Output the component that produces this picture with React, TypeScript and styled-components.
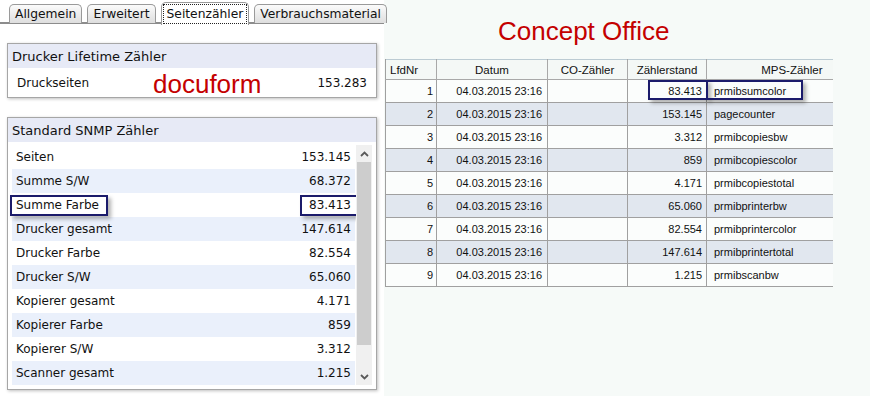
import React from "react";
import styled, { createGlobalStyle } from "styled-components";

const GlobalStyle = createGlobalStyle`
  html, body {
    margin: 0;
    padding: 0;
    background: #f6faf8;
  }
  body {
    width: 870px;
    height: 396px;
    overflow: hidden;
  }
`;

const Page = styled.div`
  display: flex;
  width: 870px;
  height: 396px;
`;

/* ---------- left: docuform ---------- */

const LeftPanel = styled.div`
  width: 384px;
  flex: 0 0 384px;
  background: #ffffff;
  font-family: "DejaVu Sans", Verdana, sans-serif;
  color: #111;
`;

const TabBar = styled.div`
  display: flex;
  gap: 5px;
  padding: 4px 0 0 9px;
  height: 18px;
  border-bottom: 2px solid #8c8c8c;
`;

const Tab = styled.div<{ $active?: boolean }>`
  display: flex;
  align-items: center;
  height: ${(p) => (p.$active ? "22px" : "18px")};
  margin-top: ${(p) => (p.$active ? "-2px" : "0")};
  padding: 0 4px;
  font-size: 12.3px;
  border: 1px solid #9a9a9a;
  border-bottom: none;
  border-radius: 5px 5px 0 0;
  background: ${(p) =>
    p.$active ? "#ffffff" : "linear-gradient(#fbfbfb, #dedede)"};
  position: relative;
  z-index: ${(p) => (p.$active ? 1 : 0)};
  span {
    outline: ${(p) => (p.$active ? "1px dotted #222" : "none")};
    outline-offset: 2px;
    padding: 0 1px;
  }
`;

const Box = styled.div<{ $top: number }>`
  margin: ${(p) => p.$top}px 0 0 7px;
  width: 368px;
  border: 1px solid #a6a6a6;
  box-shadow: 1px 1px 3px rgba(0, 0, 0, 0.25);
  background: #fff;
`;

const BoxHeader = styled.div`
  height: 24px;
  display: flex;
  align-items: center;
  padding-left: 4px;
  background: #e7eaf6;
  font-size: 13px;
`;

const LifetimeRow = styled.div`
  height: 29px;
  display: flex;
  align-items: center;
  padding: 0 9px 0 9px;
  font-size: 12px;
`;

const RowLabel = styled.span<{ $w?: number }>`
  flex: 0 0 ${(p) => (p.$w ? `${p.$w}px` : "auto")};
`;

const Brand = styled.span`
  font-family: "Liberation Sans", Arial, sans-serif;
  font-size: 26px;
  color: #c40000;
  line-height: 28px;
  margin-top: 2px;
`;

const RowValue = styled.span`
  margin-left: auto;
`;

const BoxBody = styled.div`
  display: flex;
  gap: 1px;
  padding: 3px 4px 4px 4px;
`;

const List = styled.div`
  flex: 1;
`;

const ListRow = styled.div<{ $alt: boolean }>`
  height: 24px;
  display: flex;
  align-items: center;
  justify-content: space-between;
  padding: 0 4px;
  font-size: 12px;
  background: ${(p) => (p.$alt ? "#eaf0fb" : "#ffffff")};
`;

const Marked = styled.span<{ $l: number; $r: number }>`
  display: inline-block;
  border: 2px solid #1b1b6b;
  padding: 1px ${(p) => p.$r}px 1px ${(p) => p.$l}px;
  margin: 0 ${(p) => -p.$r - 2}px 0 ${(p) => -p.$l - 2}px;
  box-shadow: 3px 3px 4px rgba(0, 0, 0, 0.3);
  line-height: 15px;
`;

const Scrollbar = styled.div`
  width: 16px;
  flex: 0 0 16px;
  background: #f0f0f0;
  display: flex;
  flex-direction: column;
`;

const ScrollArrow = styled.div<{ $end?: boolean }>`
  height: 17px;
  margin-top: ${(p) => (p.$end ? "auto" : "0")};
  display: flex;
  align-items: center;
  justify-content: center;
`;

const ScrollThumb = styled.div`
  flex: 0 0 183px;
  margin: 0 1px;
  background: #cdcdcd;
`;

/* ---------- right: Concept Office ---------- */

const RightPanel = styled.div`
  flex: 1;
  padding-left: 1px;
  font-family: "Liberation Sans", Arial, sans-serif;
`;

const Title = styled.div`
  padding: 16px 0 0 113px;
  height: 30px;
  margin-bottom: 13px;
  font-size: 26px;
  line-height: 30px;
  color: #c40000;
`;

const Table = styled.table`
  border-collapse: collapse;
  table-layout: fixed;
  width: 447px;
  font-size: 11px;
  color: #111;
  border-top: 1px solid #bccbd3;
`;

const Col = styled.col<{ $w: number }>`
  width: ${(p) => p.$w}px;
`;

const HeadCell = styled.th<{ $align: string }>`
  height: 19px;
  padding: 0 ${(p) => (p.$align === "right" ? "10px" : "4px")};
  font-weight: normal;
  font-size: 11.5px;
  text-align: ${(p) => p.$align};
  background: #f4f8f6;
  border: 1px solid #a8a8a8;
  border-top: none;
  border-left-color: #cfcfcf;
  white-space: nowrap;
  overflow: hidden;
  &:first-child {
    border-left: 1px solid #a0a0a0;
  }
  &:last-child {
    border-right: none;
  }
`;

const BodyRow = styled.tr<{ $alt: boolean }>`
  background: ${(p) => (p.$alt ? "#e1e7ef" : "#fbfdfc")};
`;

const Cell = styled.td<{ $align?: string; $pad?: number }>`
  position: relative;
  height: 22px;
  padding: 0 ${(p) => p.$pad ?? 4}px;
  text-align: ${(p) => p.$align ?? "right"};
  border: 1px solid #a0a0a0;
  white-space: nowrap;
  &:last-child {
    border-right: none;
  }
`;

const CellMark = styled.div<{ $left: number; $width: number }>`
  position: absolute;
  top: 0;
  left: ${(p) => p.$left}px;
  width: ${(p) => p.$width}px;
  height: 20px;
  box-sizing: border-box;
  border: 2px solid #1b1b6b;
  box-shadow: 3px 3px 4px rgba(0, 0, 0, 0.3);
  pointer-events: none;
`;

const snmpRows: [string, string][] = [
  ["Seiten", "153.145"],
  ["Summe S/W", "68.372"],
  ["Summe Farbe", "83.413"],
  ["Drucker gesamt", "147.614"],
  ["Drucker Farbe", "82.554"],
  ["Drucker S/W", "65.060"],
  ["Kopierer gesamt", "4.171"],
  ["Kopierer Farbe", "859"],
  ["Kopierer S/W", "3.312"],
  ["Scanner gesamt", "1.215"],
];

const coRows: [string, string][] = [
  ["83.413", "prmibsumcolor"],
  ["153.145", "pagecounter"],
  ["3.312", "prmibcopiesbw"],
  ["859", "prmibcopiescolor"],
  ["4.171", "prmibcopiestotal"],
  ["65.060", "prmibprinterbw"],
  ["82.554", "prmibprintercolor"],
  ["147.614", "prmibprintertotal"],
  ["1.215", "prmibscanbw"],
];

const tabs = ["Allgemein", "Erweitert", "Seitenzähler", "Verbrauchsmaterial"];

const Chevron = ({ up }: { up?: boolean }) => (
  <svg width="9" height="6" viewBox="0 0 9 6">
    <path
      d={up ? "M1 5 L4.5 1.5 L8 5" : "M1 1 L4.5 4.5 L8 1"}
      fill="none"
      stroke="#5a5a5a"
      strokeWidth="1.8"
    />
  </svg>
);

const App = () => {
  return (
    <Page>
      <GlobalStyle />
      <LeftPanel>
        <TabBar>
          {tabs.map((t) => (
            <Tab key={t} $active={t === "Seitenzähler"}>
              <span>{t}</span>
            </Tab>
          ))}
        </TabBar>
        <Box $top={19}>
          <BoxHeader>Drucker Lifetime Zähler</BoxHeader>
          <LifetimeRow>
            <RowLabel $w={136}>Druckseiten</RowLabel>
            <Brand>docuform</Brand>
            <RowValue>153.283</RowValue>
          </LifetimeRow>
        </Box>
        <Box $top={19}>
          <BoxHeader>Standard SNMP Zähler</BoxHeader>
          <BoxBody>
            <List>
              {snmpRows.map(([label, value], i) => (
                <ListRow key={label} $alt={i % 2 === 1}>
                  {label === "Summe Farbe" ? (
                    <>
                      <Marked $l={4} $r={7}>{label}</Marked>
                      <Marked $l={7} $r={5}>{value}</Marked>
                    </>
                  ) : (
                    <>
                      <span>{label}</span>
                      <span>{value}</span>
                    </>
                  )}
                </ListRow>
              ))}
            </List>
            <Scrollbar>
              <ScrollArrow>
                <Chevron up />
              </ScrollArrow>
              <ScrollThumb />
              <ScrollArrow $end>
                <Chevron />
              </ScrollArrow>
            </Scrollbar>
          </BoxBody>
        </Box>
      </LeftPanel>
      <RightPanel>
        <Title>Concept Office</Title>
        <Table>
          <colgroup>
            <Col $w={51} />
            <Col $w={111} />
            <Col $w={80} />
            <Col $w={79} />
            <Col $w={126} />
          </colgroup>
          <thead>
            <tr>
              <HeadCell $align="left">LfdNr</HeadCell>
              <HeadCell $align="center">Datum</HeadCell>
              <HeadCell $align="center">CO-Zähler</HeadCell>
              <HeadCell $align="center">Zählerstand</HeadCell>
              <HeadCell $align="right">MPS-Zähler</HeadCell>
            </tr>
          </thead>
          <tbody>
            {coRows.map(([count, mps], i) => (
              <BodyRow key={mps} $alt={i % 2 === 1}>
                <Cell $pad={3}>{i + 1}</Cell>
                <Cell $pad={5}>04.03.2015 23:16</Cell>
                <Cell />
                <Cell $pad={4}>
                  {count}
                  {i === 0 && <CellMark $left={20} $width={60} />}
                </Cell>
                <Cell $align="left" $pad={7}>
                  {mps}
                  {i === 0 && <CellMark $left={-1} $width={97} />}
                </Cell>
              </BodyRow>
            ))}
          </tbody>
        </Table>
      </RightPanel>
    </Page>
  );
};

export default App;
